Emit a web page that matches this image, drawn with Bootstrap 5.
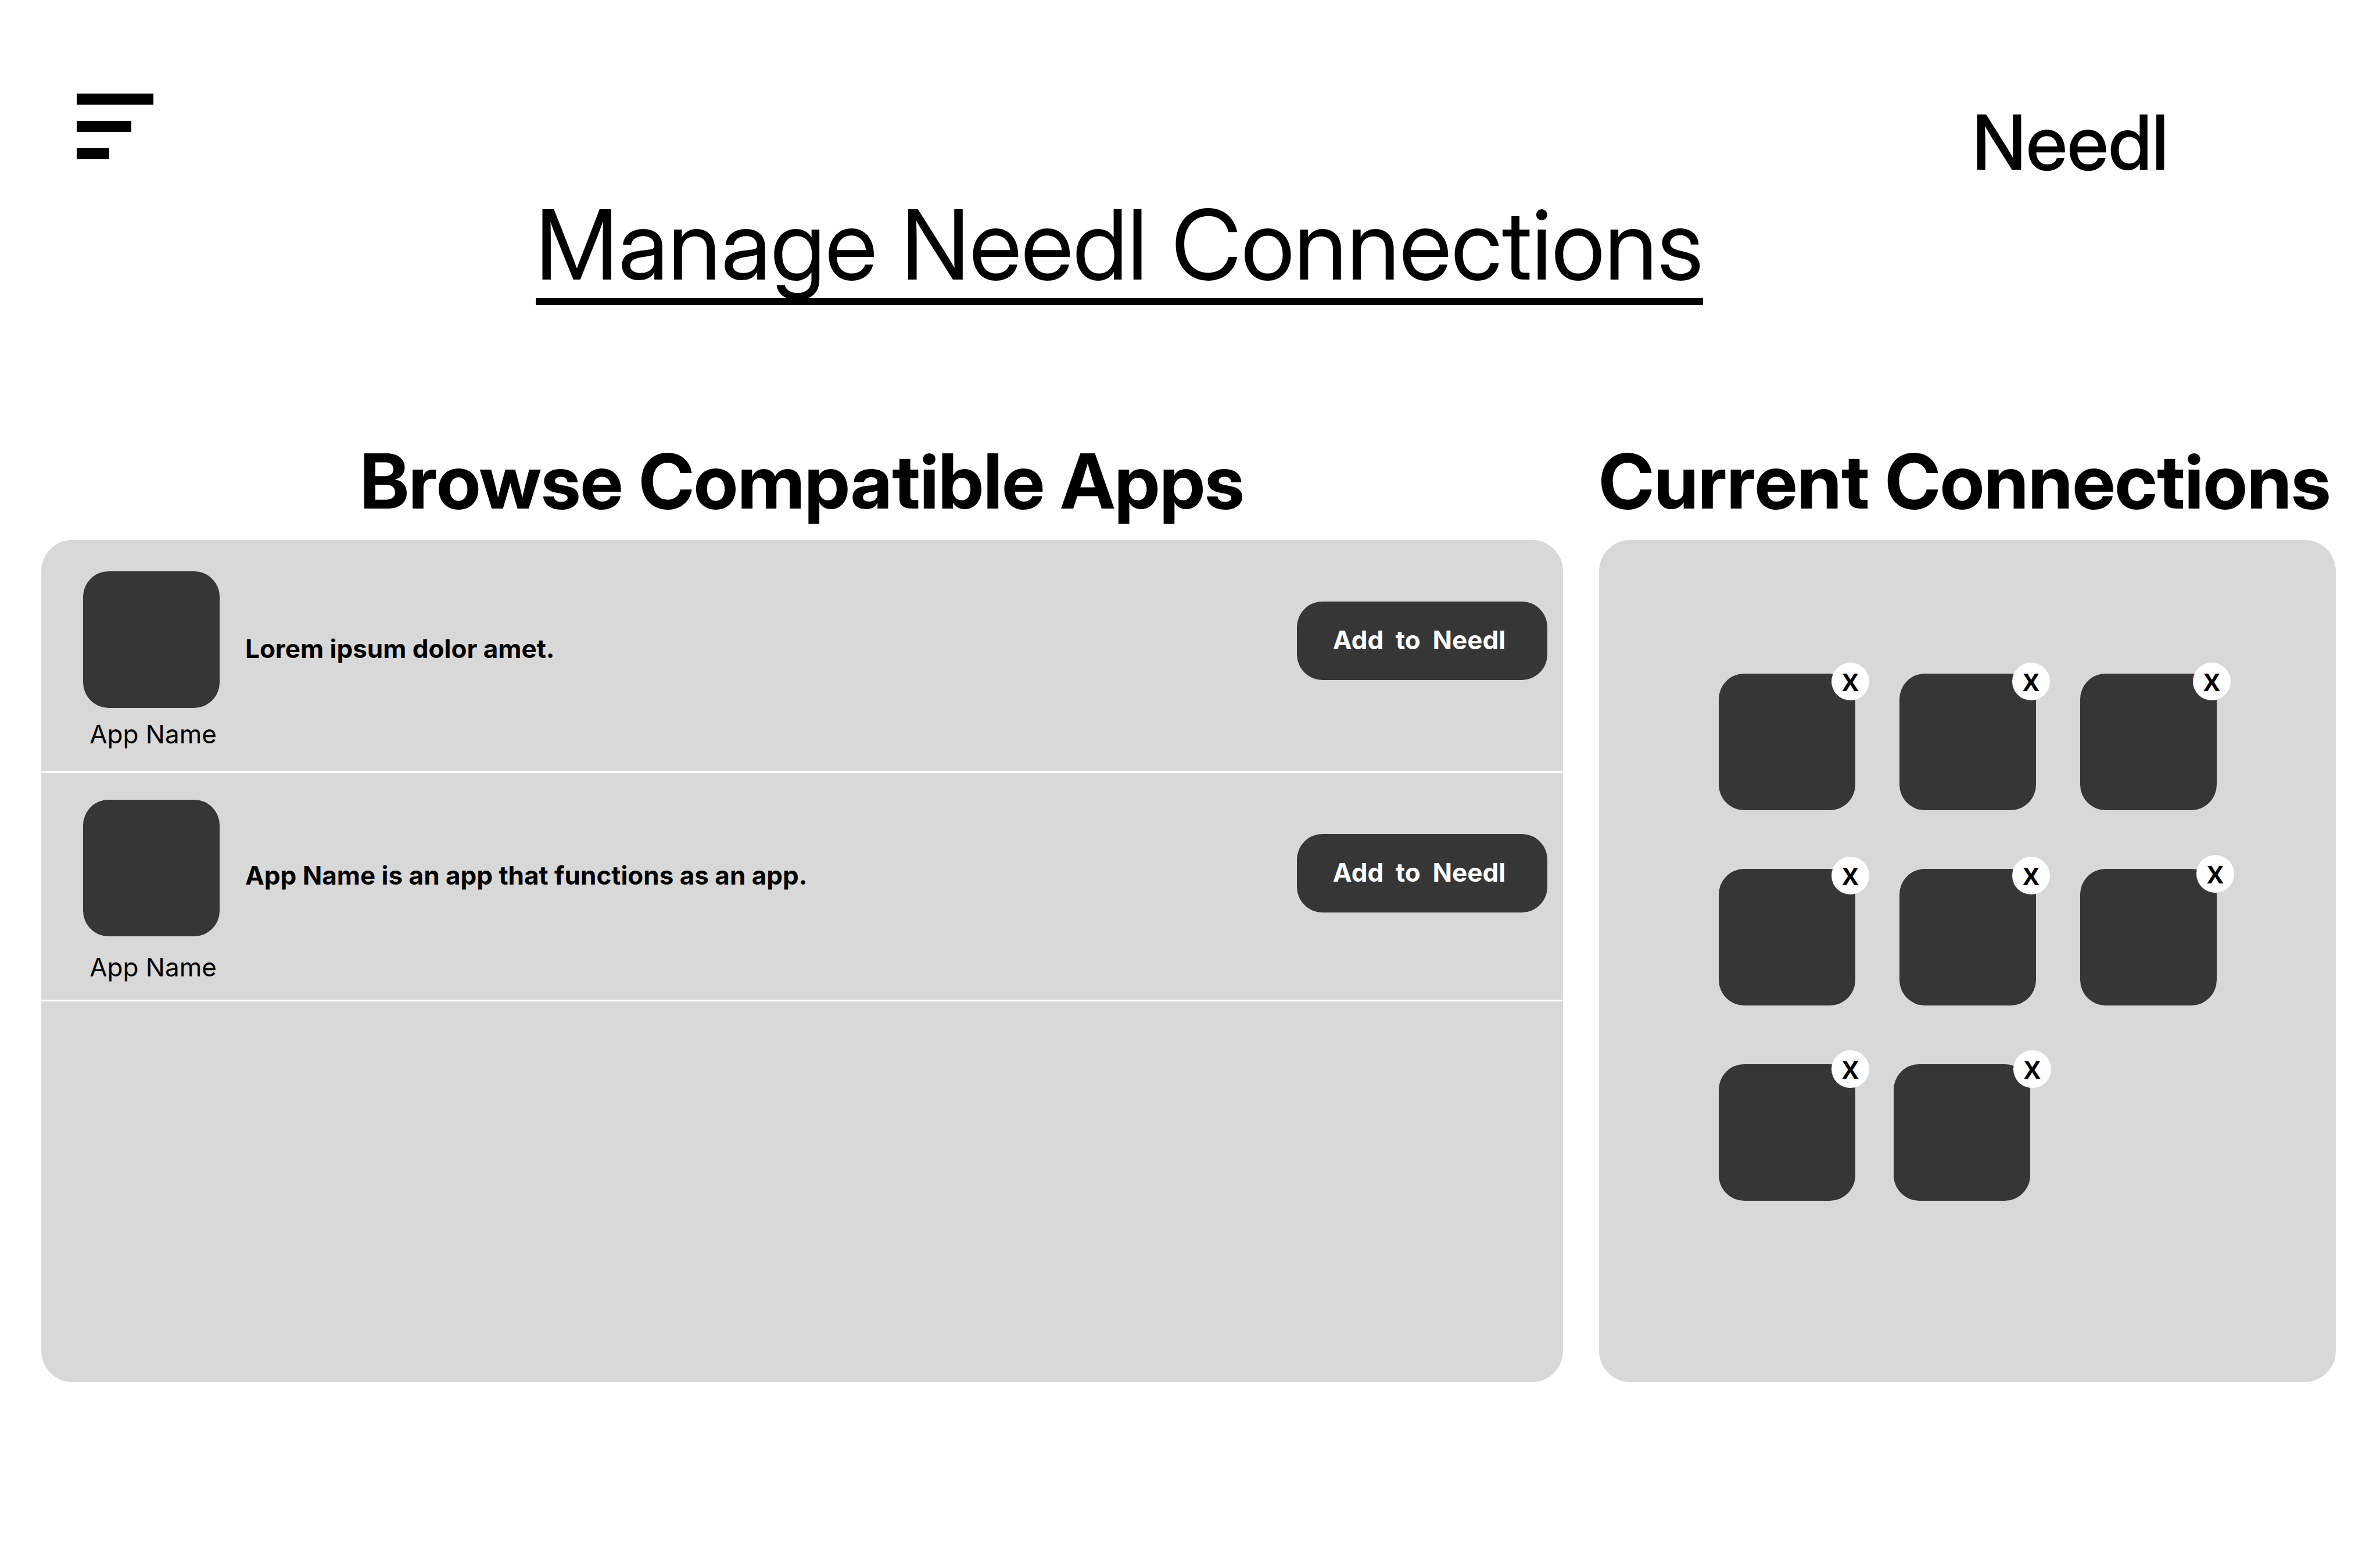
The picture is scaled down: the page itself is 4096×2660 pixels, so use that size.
<!DOCTYPE html>
<html lang="en">
<head>
<meta charset="utf-8">
<meta name="viewport" content="width=device-width, initial-scale=1">
<title>Needl – Manage Connections</title>
<link href="https://cdn.jsdelivr.net/npm/bootstrap@5.3.0/dist/css/bootstrap.min.css" rel="stylesheet">
<style>
  body { font-family: Inter, "Liberation Sans", sans-serif; color: #000; background: #fff; }

  /* Large text uses the display cut of the typeface */
  .brand, .page-title, .board-title { font-family: "Inter Display", Inter, "Liberation Sans", sans-serif; font-variation-settings: "opsz" 32; }

  .site-header { padding: 161px 364px 0 132px; }
  .menu-btn { line-height: 0; }
  .brand { font-size: 130px; line-height: 168px; font-weight: 500; color: #000; }

  .title-wrap { padding-left: 22.5%; }
  .page-title { font-size: 166px; line-height: 184px; font-weight: 400; border-bottom: 12px solid #000; }

  .boards { padding: 225px 76px 200px 71px; gap: 62px; }
  .board-apps { flex: 2619 1 0; min-width: 0; }
  .board-links { flex: 1268 1 0; min-width: 0; }
  .board-title { font-size: 130px; line-height: 156px; font-weight: 700; margin-bottom: 23px; white-space: nowrap; }
  .panel { background: #d8d8d8; border-radius: 54px; min-height: 1449px; }

  .app-row { padding: 54px 27px 0 72px; border-bottom: 3px solid #fff; height: 401px; }
  .app-row + .app-row { height: 393px; padding-top: 46px; }
  .app-tile { width: 235px; height: 235px; border-radius: 44px; background: #363636; }
  .app-name { font-size: 44px; line-height: 54px; margin-top: 18px; padding-left: 6px; }
  .app-row + .app-row .app-name { margin-top: 26px; }
  .app-desc { font-size: 44px; line-height: 54px; font-weight: 700; margin: 106px 0 0 44px; }
  .app-row + .app-row .app-desc { margin-top: 103px; }
  .add-btn { width: 431px; height: 135px; margin-top: 52px; border-radius: 44px; background: #363636; color: #fff;
             font-size: 44px; line-height: 54px; font-weight: 700; white-space: pre; padding: 0 10px 4px 0; }
  .app-row + .app-row .add-btn { margin-top: 59px; }
  .add-btn:hover { background: #4a4a4a; color: #fff; }

  .link-grid { padding: 230px 0 0 206px; gap: 101px; }
  .link-line { gap: 76px; --out: 24px; --up: -19px; }
  .link-line:nth-child(2) { --up: -21px; }
  .link-line:nth-child(3) { --up: -24px; gap: 66px; }
  .remove-btn { top: var(--up); right: calc(var(--out) * -1); width: 65px; height: 65px; background: #fff; color: #000;
                font-family: "Open Sans", "Noto Sans", sans-serif; font-size: 42px; line-height: 65px; font-weight: 700; padding: 0; }
  .remove-far { --out: 30px; --up: -24px; }
  .remove-farther { --out: 36px; }
</style>
</head>
<body>

<header class="site-header d-flex justify-content-between align-items-start">
  <button type="button" class="menu-btn btn p-0 border-0 rounded-0" aria-label="Menu">
    <svg width="132" height="113" viewBox="0 0 132 113" aria-hidden="true">
      <path d="M0 0h132v19H0zM0 47h94v19H0zM0 94h56v19H0z" fill="#000"/>
    </svg>
  </button>
  <a href="#" class="brand text-decoration-none">Needl</a>
</header>

<main>
  <div class="title-wrap">
    <h1 class="page-title d-inline-block mb-0 text-nowrap">Manage Needl Connections</h1>
  </div>

  <div class="boards d-flex">
    <section class="board-apps">
      <h2 class="board-title text-center">Browse Compatible Apps</h2>
      <div class="panel">
        <article class="app-row d-flex align-items-start">
          <div class="text-center">
            <div class="app-tile"></div>
            <div class="app-name">App Name</div>
          </div>
          <p class="app-desc">Lorem ipsum dolor amet.</p>
          <button type="button" class="add-btn btn border-0 ms-auto">Add  to  Needl</button>
        </article>
        <article class="app-row d-flex align-items-start">
          <div class="text-center">
            <div class="app-tile"></div>
            <div class="app-name">App Name</div>
          </div>
          <p class="app-desc">App Name is an app that functions as an app.</p>
          <button type="button" class="add-btn btn border-0 ms-auto">Add  to  Needl</button>
        </article>
      </div>
    </section>

    <section class="board-links">
      <h2 class="board-title">Current Connections</h2>
      <div class="panel link-grid d-flex flex-column">
        <div class="link-line d-flex">
          <div class="app-tile position-relative"><button type="button" class="remove-btn btn border-0 rounded-circle position-absolute">X</button></div>
          <div class="app-tile position-relative"><button type="button" class="remove-btn btn border-0 rounded-circle position-absolute">X</button></div>
          <div class="app-tile position-relative"><button type="button" class="remove-btn btn border-0 rounded-circle position-absolute">X</button></div>
        </div>
        <div class="link-line d-flex">
          <div class="app-tile position-relative"><button type="button" class="remove-btn btn border-0 rounded-circle position-absolute">X</button></div>
          <div class="app-tile position-relative"><button type="button" class="remove-btn btn border-0 rounded-circle position-absolute">X</button></div>
          <div class="app-tile position-relative"><button type="button" class="remove-btn remove-far btn border-0 rounded-circle position-absolute">X</button></div>
        </div>
        <div class="link-line d-flex">
          <div class="app-tile position-relative"><button type="button" class="remove-btn btn border-0 rounded-circle position-absolute">X</button></div>
          <div class="app-tile position-relative"><button type="button" class="remove-btn remove-farther btn border-0 rounded-circle position-absolute">X</button></div>
        </div>
      </div>
    </section>
  </div>
</main>

<script src="https://cdn.jsdelivr.net/npm/bootstrap@5.3.0/dist/js/bootstrap.bundle.min.js"></script>
</body>
</html>
